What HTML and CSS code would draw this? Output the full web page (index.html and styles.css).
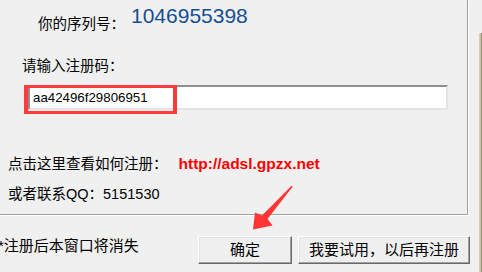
FILE: index.html
```html
<!DOCTYPE html>
<html lang="zh-CN">
<head>
<meta charset="utf-8">
<title>注册</title>
<link rel="stylesheet" href="styles.css">
</head>
<body>
<div class="screen">
  <div class="main">
    <div class="group">
      <div class="serial-row">
        <span class="label">你的序列号：</span>
        <span class="serial">1046955398</span>
      </div>
      <div class="prompt">请输入注册码：</div>
      <div class="field-wrap">
        <div class="field">aa42496f29806951</div>
        <div class="highlight"></div>
      </div>
      <div class="link-row"><span>点击这里查看如何注册：</span><span class="url">http://adsl.gpzx.net</span></div>
      <div class="qq">或者联系QQ：5151530</div>
    </div>
    <div class="footer">
      <span class="note">*注册后本窗口将消失</span>
      <button class="btn ok">确定</button>
      <button class="btn trial">我要试用，以后再注册</button>
    </div>
  </div>
  <div class="edge"></div>
  <svg class="arrow" viewBox="0 0 482 272" width="482" height="272">
    <polygon points="292.8,186.6 267.5,219 272.5,225.5 253,229.5 255,212.5 262,215.5 291.6,185.8" fill="#ff3535"/>
  </svg>
</div>
</body>
</html>
```
FILE: styles.css
```css
html, body {
  margin: 0;
  padding: 0;
  background: #f0f0f0;
}
body {
  width: 482px;
  height: 272px;
  overflow: hidden;
  font-family: "Liberation Sans", "Noto Sans CJK SC", sans-serif;
  color: #000;
}
.screen {
  position: relative;
  display: flex;
  width: 482px;
  height: 272px;
  overflow: hidden;
}
.main {
  width: 479px;
  flex: 0 0 479px;
}
.edge {
  flex: 0 0 3px;
  margin-top: 33px;
  background: linear-gradient(90deg, #dcd2bf 0%, #c9bfa6 55%, #6f7e57 100%);
}
.group {
  box-sizing: border-box;
  width: 468px;
  height: 215px;
  border-right: 1px solid #a0a0a0;
  border-bottom: 1px solid #a0a0a0;
  box-shadow: 1px 1px 0 #ffffff;
  font-size: 14.5px;
  line-height: 16px;
}
.serial-row {
  display: flex;
  align-items: flex-start;
  padding-left: 38px;
  height: 32px;
}
.label {
  margin-top: 16px;
}
.serial {
  margin-top: 5px;
  margin-left: 6px;
  font-size: 21px;
  line-height: 21px;
  color: #164e92;
}
.prompt {
  margin-top: 26px;
  padding-left: 22px;
}
.field-wrap {
  position: relative;
  margin-top: 11px;
  margin-left: 28px;
  width: 420px;
}
.field {
  box-sizing: border-box;
  height: 25px;
  background: #fff;
  border-top: 2px solid #8f8f8f;
  border-left: 2px solid #8f8f8f;
  border-right: 2px solid #e3e3e3;
  border-bottom: 2px solid #e3e3e3;
  padding-left: 3px;
  font-size: 13.3px;
  line-height: 21px;
  color: #000;
}
.highlight {
  position: absolute;
  left: -4px;
  top: 0;
  box-sizing: border-box;
  width: 153px;
  height: 29px;
  border-style: solid;
  border-color: #ff3b3b;
  border-width: 3px 4px;
}
.link-row {
  margin-top: 46px;
  padding-left: 8px;
}
.url {
  margin-left: 11px;
  color: #ff0000;
  font-weight: bold;
  font-size: 15.5px;
  line-height: 16px;
}
.qq {
  margin-top: 14px;
  padding-left: 8px;
}
.footer {
  display: flex;
  align-items: flex-start;
  padding-top: 21px;
}
.note {
  flex: 0 0 200px;
  margin-left: -2px;
  margin-top: 2px;
  font-size: 15px;
  line-height: 16px;
  white-space: nowrap;
}
.btn {
  box-sizing: border-box;
  height: 28px;
  margin: 0;
  padding: 0;
  font: inherit;
  font-size: 15px;
  line-height: 16px;
  color: #000;
  background: #efefef;
  border: 1px solid;
  border-color: #ffffff #696969 #696969 #ffffff;
  box-shadow: inset -1px -1px 0 #a0a0a0, inset 1px 1px 0 #e3e3e3;
  border-radius: 0;
}
.ok {
  width: 94px;
}
.trial {
  width: 172px;
  margin-left: 6px;
}
.arrow {
  position: absolute;
  left: 0;
  top: 0;
  pointer-events: none;
}
```
